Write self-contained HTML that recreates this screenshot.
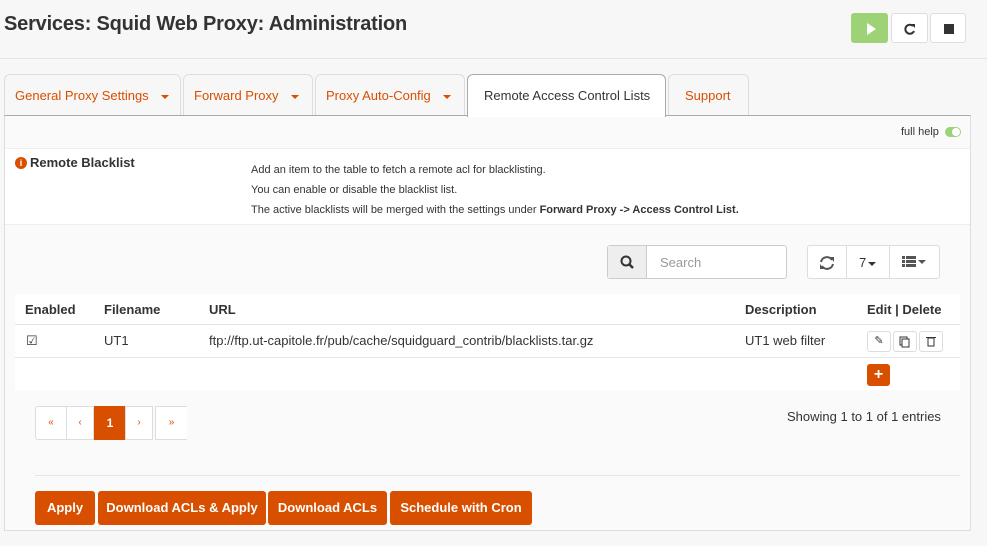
<!DOCTYPE html>
<html><head><meta charset="utf-8"><style>
*{box-sizing:border-box;margin:0;padding:0}
body{width:987px;height:546px;background:#f7f7f7;font-family:"Liberation Sans",sans-serif;font-size:12px;color:#333;position:relative;overflow:hidden}
.a{position:absolute}
.hdr{left:0;top:0;width:987px;height:59px;border-bottom:1px solid #e5e5e5;background:#f7f7f7}
h1{position:absolute;left:4px;top:13px;font-size:20px;font-weight:bold;color:#333;letter-spacing:-0.2px}
.tb{top:74px;height:42px;border:1px solid #ddd;border-bottom:none;border-radius:6px 6px 0 0;background:#f7f7f7;color:#d94f00;font-size:13px;line-height:42px;padding-left:10px}
.car{display:inline-block;width:0;height:0;border-left:4px solid transparent;border-right:4px solid transparent;border-top:4px solid #d94f00;vertical-align:middle;margin-left:12px}
.btn{position:absolute;background:#fff;border:1px solid #ddd;border-radius:3px}
.ob{position:absolute;top:491px;height:34px;background:#d94f00;color:#fff;font-weight:bold;font-size:13px;line-height:34px;text-align:center;border-radius:3px}
.th{font-weight:bold;font-size:13px;top:302px}
.td{font-size:13px;top:333px}
.sb{position:absolute;top:331px;width:24px;height:21px;background:#fff;border:1px solid #ddd;border-radius:3px}
.pg{position:absolute;top:406px;height:34px;width:28px;border:1px solid #ddd;background:#fff;color:#d94f00;text-align:center;line-height:32px;font-size:10px}
</style></head><body>
<div class="a hdr"><h1>Services: Squid Web Proxy: Administration</h1></div>
<div class="btn" style="left:851px;top:13px;width:37px;height:30px;background:#9dd376;border-color:#9dd376"><svg width="37" height="30"><polygon points="15,9 15,21 24,15" fill="#fff"/></svg></div>
<div class="btn" style="left:891px;top:13px;width:37px;height:30px"><svg width="37" height="30"><path d="M21,12 A4.5,4.5 0 1 0 22,17" stroke="#333" stroke-width="2" fill="none"/><polygon points="19,10 23,10 23,14" fill="#333"/></svg></div>
<div class="btn" style="left:930px;top:13px;width:36px;height:30px"><div class="a" style="left:13px;top:10px;width:10px;height:10px;background:#333"></div></div>

<div class="a tb" style="left:4px;width:177px">General Proxy Settings<span class="car"></span></div>
<div class="a tb" style="left:183px;width:130px">Forward Proxy<span class="car"></span></div>
<div class="a tb" style="left:315px;width:150px">Proxy Auto-Config<span class="car"></span></div>
<div class="a tb" style="left:467px;width:199px;background:#fff;border-color:#aaa;color:#333;padding-left:16px;height:43px;z-index:2">Remote Access Control Lists</div>
<div class="a tb" style="left:668px;width:81px;padding-left:16px">Support</div>

<div class="a" style="left:4px;top:115px;width:967px;height:416px;border:1px solid #ddd;border-top-color:#aaa;background:#fafafa"></div>
<div class="a" style="left:901px;top:126px;font-size:11px;color:#333">full help</div>
<div class="a" style="left:945px;top:127px;width:16px;height:10px;border-radius:5px;background:#9dd376"><div class="a" style="left:7px;top:1px;width:8px;height:8px;border-radius:4px;background:#fff"></div></div>
<div class="a" style="left:5px;top:148px;width:965px;height:77px;background:#fff;border-top:1px solid #eee;border-bottom:1px solid #eee"></div>
<div class="a" style="left:15px;top:157px;width:12px;height:12px;border-radius:6px;background:#d94f00;color:#fff;font-size:9px;font-weight:bold;text-align:center;line-height:12px">i</div>
<div class="a" style="left:30px;top:155px;font-size:13px;font-weight:bold;color:#333">Remote Blacklist</div>
<div class="a" style="left:251px;top:160px;font-size:11px;line-height:20px;color:#333">Add an item to the table to fetch a remote acl for blacklisting.<br>You can enable or disable the blacklist list.<br>The active blacklists will be merged with the settings under <b>Forward Proxy -&gt; Access Control List.</b></div>

<div class="a" style="left:607px;top:245px;width:180px;height:34px;border:1px solid #ccc;border-radius:3px;background:#fff"></div>
<div class="a" style="left:608px;top:246px;width:39px;height:32px;background:#eee;border-right:1px solid #ccc"><svg width="39" height="32"><circle cx="18" cy="15" r="4.5" stroke="#333" stroke-width="2" fill="none"/><line x1="21" y1="18" x2="25" y2="22" stroke="#333" stroke-width="2.5"/></svg></div>
<div class="a" style="left:660px;top:255px;font-size:13px;color:#999">Search</div>
<div class="btn" style="left:807px;top:245px;width:133px;height:34px"></div>
<div class="a" style="left:846px;top:246px;width:1px;height:32px;background:#ddd"></div>
<div class="a" style="left:889px;top:246px;width:1px;height:32px;background:#ddd"></div>
<svg class="a" style="left:817px;top:253px" width="20" height="20"><path d="M4,9 A6,6 0 0 1 15,7 M16,11 A6,6 0 0 1 5,13" stroke="#555" stroke-width="2" fill="none"/><polygon points="13,4 17,4 17,9" fill="#555"/><polygon points="3,11 7,16 3,16" fill="#555"/></svg>
<div class="a" style="left:859px;top:255px;font-size:13px">7<span class="car" style="border-top-color:#333;margin-left:2px"></span></div>
<svg class="a" style="left:901px;top:254px" width="30" height="16"><rect x="1" y="2" width="3" height="3" fill="#555"/><rect x="5" y="2" width="10" height="3" fill="#555"/><rect x="1" y="6" width="3" height="3" fill="#555"/><rect x="5" y="6" width="10" height="3" fill="#555"/><rect x="1" y="10" width="3" height="3" fill="#555"/><rect x="5" y="10" width="10" height="3" fill="#555"/><polygon points="17,6 25,6 21,10" fill="#555"/></svg>

<div class="a" style="left:15px;top:294px;width:945px;height:96px;background:#fff"></div>
<div class="a" style="left:15px;top:324px;width:945px;height:1px;background:#e5e5e5"></div>
<div class="a" style="left:15px;top:357px;width:945px;height:1px;background:#e5e5e5"></div>
<div class="a th" style="left:25px">Enabled</div>
<div class="a th" style="left:104px">Filename</div>
<div class="a th" style="left:209px">URL</div>
<div class="a th" style="left:745px">Description</div>
<div class="a th" style="left:867px">Edit | Delete</div>
<div class="a td" style="left:26px;font-size:13px">&#9745;</div>
<div class="a td" style="left:104px">UT1</div>
<div class="a td" style="left:209px">ftp://ftp.ut-capitole.fr/pub/cache/squidguard_contrib/blacklists.tar.gz</div>
<div class="a td" style="left:745px">UT1 web filter</div>
<div class="sb" style="left:867px;font-size:11px;text-align:center;line-height:19px">&#9998;</div>
<div class="sb" style="left:893px"><svg width="22" height="19"><rect x="6" y="5" width="7" height="8" stroke="#333" fill="none"/><rect x="8" y="7" width="7" height="8" stroke="#333" fill="#fff"/></svg></div>
<div class="sb" style="left:919px"><svg width="22" height="19"><rect x="8" y="6" width="6" height="8" stroke="#333" fill="none"/><line x1="6" y1="5.5" x2="16" y2="5.5" stroke="#333"/></svg></div>
<div class="a" style="left:867px;top:364px;width:23px;height:22px;background:#d94f00;border-radius:3px;color:#fff;font-weight:bold;font-size:16px;text-align:center;line-height:21px">+</div>

<div class="pg" style="left:35px;width:32px;border-radius:3px 0 0 3px">«</div>
<div class="pg" style="left:66px">‹</div>
<div class="pg" style="left:94px;width:32px;background:#d94f00;border-color:#d94f00;color:#fff;font-size:12px;font-weight:bold">1</div>
<div class="pg" style="left:125px">›</div>
<div class="pg" style="left:155px;width:32px;border-right:none">»</div>
<div class="a" style="left:787px;top:409px;font-size:13px">Showing 1 to 1 of 1 entries</div>

<div class="a" style="left:35px;top:475px;width:925px;height:1px;background:#e5e5e5"></div>
<div class="ob" style="left:35px;width:60px">Apply</div>
<div class="ob" style="left:98px;width:168px">Download ACLs &amp; Apply</div>
<div class="ob" style="left:268px;width:119px">Download ACLs</div>
<div class="ob" style="left:390px;width:142px">Schedule with Cron</div>
</body></html>
